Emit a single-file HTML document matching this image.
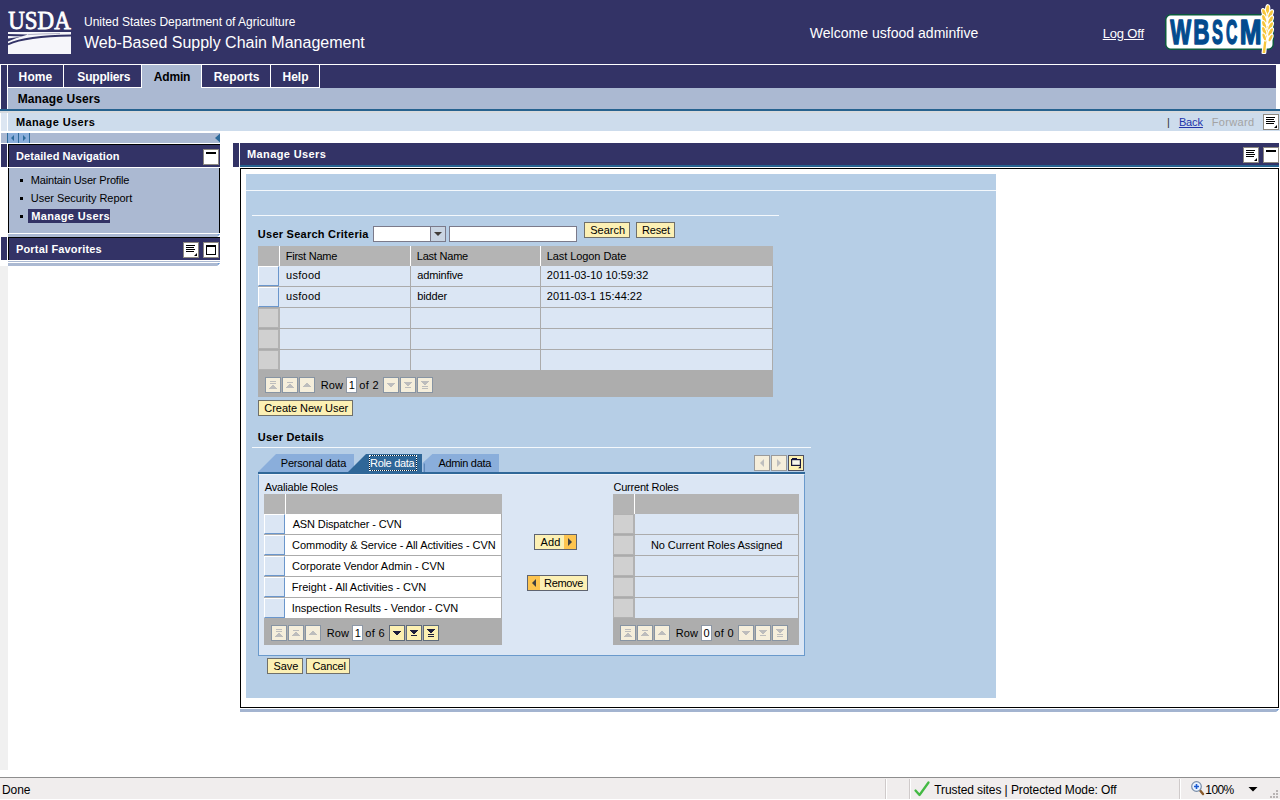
<!DOCTYPE html>
<html lang="en"><head><meta charset="utf-8"><title>Manage Users - WBSCM</title>
<style>
html,body{margin:0;padding:0;background:#fff;}
body{width:1280px;height:800px;overflow:hidden;position:relative;font-family:"Liberation Sans",Arial,sans-serif;font-size:11px;color:#000;}
body div,body svg,body a,body span.t{position:absolute;display:block;box-sizing:border-box;}
.t{white-space:nowrap;line-height:1;}
svg{overflow:visible;}
</style></head>
<body>
<div id="masthead" style="left:0;top:0;width:0;height:0;">
<div style="left:0px;top:0px;width:1280px;height:64px;background:#333366;"></div>
<svg style="left:8px;top:6px;" width="63" height="48" viewBox="0 0 63 48"><text x="0.3" y="23.2" font-family="Liberation Serif, serif" font-size="26" fill="#fff" stroke="#fff" stroke-width="0.8" textLength="62.4" lengthAdjust="spacingAndGlyphs">USDA</text><rect x="0" y="26" width="63" height="22" fill="#f6f6fa"/><path d="M0,38.4 Q18,30.1 63,29.6" stroke="#333366" stroke-width="2" fill="none"/><path d="M0,27.9 L20,28.6 Q9,31.5 0,35.6 Z" fill="#333366"/><path d="M0,29.9 L14.8,30.4 L0,32.5 Z" fill="#f6f6fa"/><path d="M20,28.6 Q35,27.7 52,27.5" stroke="#333366" stroke-width="0.6" fill="none" opacity="0.6"/></svg>
<div class="t" style="left:84px;top:16px;font-size:12px;color:#fff;">United States Department of Agriculture</div>
<div class="t" style="left:84px;top:35px;font-size:16px;color:#fff;">Web-Based Supply Chain Management</div>
<div class="t" style="left:809.7px;top:26px;font-size:14px;color:#fff;letter-spacing:0.03px;">Welcome usfood adminfive</div>
<a class="t" style="left:1102.66px;top:27px;font-size:13px;color:#fff;text-decoration:underline;letter-spacing:-0.17px;">Log Off</a>
<svg style="left:1165px;top:14px;" width="109" height="36" viewBox="0 0 109 36"><rect x="0.75" y="0.75" width="107.5" height="34.5" rx="5" ry="5" fill="#fff" stroke="#0b5a3c" stroke-width="1.5"/><text y="29.5" font-family="Liberation Sans, sans-serif" font-weight="700" font-size="35" fill="#034b8e" stroke="#034b8e" stroke-width="1.5" stroke-linejoin="round"><tspan x="5.25" textLength="20.92" lengthAdjust="spacingAndGlyphs">W</tspan><tspan x="28.17" textLength="16.3" lengthAdjust="spacingAndGlyphs">B</tspan><tspan x="46.89" textLength="10.9" lengthAdjust="spacingAndGlyphs">S</tspan><tspan x="60.92" textLength="11.32" lengthAdjust="spacingAndGlyphs">C</tspan><tspan x="74.63" textLength="21.81" lengthAdjust="spacingAndGlyphs">M</tspan></text><g fill="#f6c63c" stroke="#fff" stroke-width="2.2" stroke-linejoin="round" paint-order="stroke"><path d="M97.6,39 Q99,27 101.4,12 L103.2,12 Q101.4,27 100.2,39 Z"/><ellipse cx="102.6" cy="-4.5" rx="1.6" ry="4.3" transform="rotate(6 102.6 -4.5)"/><ellipse cx="99.2" cy="-1" rx="1.5" ry="4.2" transform="rotate(-20 99.2 -1)"/><ellipse cx="105.6" cy="0" rx="1.5" ry="4.2" transform="rotate(26 105.6 0)"/><ellipse cx="99.2" cy="5" rx="1.5" ry="4.2" transform="rotate(-20 99.2 5)"/><ellipse cx="105.6" cy="6" rx="1.5" ry="4.2" transform="rotate(26 105.6 6)"/><ellipse cx="99.2" cy="11" rx="1.5" ry="4.2" transform="rotate(-20 99.2 11)"/><ellipse cx="105.6" cy="12" rx="1.5" ry="4.2" transform="rotate(26 105.6 12)"/><ellipse cx="99.2" cy="17" rx="1.5" ry="4.2" transform="rotate(-20 99.2 17)"/><ellipse cx="105.6" cy="18" rx="1.5" ry="4.2" transform="rotate(26 105.6 18)"/><ellipse cx="99.2" cy="23" rx="1.3" ry="3.6" transform="rotate(-20 99.2 23)"/><ellipse cx="105.6" cy="24" rx="1.3" ry="3.6" transform="rotate(26 105.6 24)"/></g></svg>
</div>
<div id="navigation" style="left:0;top:0;width:0;height:0;">
<div style="left:1px;top:65px;width:1275px;height:23px;background:#333366;"></div>
<div style="left:1px;top:88px;width:6px;height:21px;background:#333366;"></div>
<div style="left:142px;top:65px;width:59px;height:23px;background:#abb9d2;"></div>
<div style="left:8px;top:88px;width:1268px;height:21px;background:#abb9d2;"></div>
<div style="left:7px;top:65px;width:1px;height:23px;background:#fff;"></div>
<div style="left:63px;top:65px;width:1px;height:23px;background:#fff;"></div>
<div style="left:141px;top:65px;width:1px;height:23px;background:#fff;"></div>
<div style="left:201px;top:65px;width:1px;height:23px;background:#fff;"></div>
<div style="left:270px;top:65px;width:1px;height:23px;background:#fff;"></div>
<div style="left:319px;top:65px;width:1px;height:23px;background:#fff;"></div>
<div style="left:7px;top:88px;width:1px;height:21px;background:#fff;"></div>
<div style="left:7px;top:87px;width:135px;height:1px;background:#fff;"></div>
<div style="left:201px;top:87px;width:119px;height:1px;background:#fff;"></div>
<div class="t" style="left:18.62px;top:71px;font-size:12px;font-weight:700;color:#fff;letter-spacing:0.11px;">Home</div>
<div class="t" style="left:77.35px;top:71px;font-size:12px;font-weight:700;color:#fff;letter-spacing:-0.2px;">Suppliers</div>
<div class="t" style="left:153.85px;top:71px;font-size:12px;font-weight:700;letter-spacing:-0.19px;">Admin</div>
<div class="t" style="left:213.82px;top:71px;font-size:12px;font-weight:700;color:#fff;letter-spacing:0.05px;">Reports</div>
<div class="t" style="left:282.62px;top:71px;font-size:12px;font-weight:700;color:#fff;letter-spacing:-0.04px;">Help</div>
<div class="t" style="left:17.72px;top:93px;font-size:12px;font-weight:700;letter-spacing:0.1px;">Manage Users</div>
<div style="left:0px;top:109px;width:1280px;height:2px;background:#26628f;"></div>
<div style="left:0px;top:111px;width:1280px;height:2px;background:#d6dade;"></div>
<div style="left:1px;top:113px;width:6px;height:18px;background:#dce6f2;"></div>
<div style="left:8px;top:113px;width:1272px;height:18px;background:#cddcec;"></div>
<div class="t" style="left:15.93px;top:117px;font-weight:700;letter-spacing:0.39px;">Manage Users</div>
<div class="t" style="left:1167px;top:117px;color:#333;">|</div>
<a class="t" style="left:1178.92px;top:117px;color:#2233aa;text-decoration:underline;letter-spacing:-0.12px;">Back</a>
<div class="t" style="left:1211.77px;top:117px;color:#a3a3a3;letter-spacing:0.35px;">Forward</div>
<svg style="left:1263px;top:114px;" width="16" height="16" viewBox="0 0 16 16"><rect x="0.5" y="0.5" width="15" height="15" fill="#fff" stroke="#8c8880"/><path d="M3,3.5h9M3,5.5h8M3,7.5h9M3,9.5h8" stroke="#000" stroke-width="1" fill="none"/><path d="M14,11v3h-3z" fill="#000"/></svg>
<div style="left:1px;top:133px;width:219px;height:10px;background:#abb9d2;"></div>
<svg style="left:7px;top:133px;" width="23" height="10" viewBox="0 0 23 10"><rect x="0" y="0" width="23" height="10" fill="#8aaedb"/><path d="M0.5,0v10M11.5,0v10M22.5,0v10" stroke="#2d6a9a" fill="none"/><path d="M7,2v6l-3,-3zM16,2v6l3,-3z" fill="#2d6a9a"/></svg>
<svg style="left:214px;top:133px;" width="6" height="10" viewBox="0 0 6 10"><path d="M6,0.5v9l-5,-4.5z" fill="#2d6a9a"/></svg>
<div style="left:1px;top:144px;width:6px;height:23px;background:#333366;"></div>
<div style="left:8px;top:144px;width:212px;height:23px;background:#333366;border-top:1px solid #000;border-left:1px solid #000;"></div>
<div class="t" style="left:16.08px;top:151px;font-weight:700;color:#fff;letter-spacing:0.07px;">Detailed Navigation</div>
<svg style="left:203px;top:149px;" width="16" height="16" viewBox="0 0 16 16"><rect x="0.5" y="0.5" width="15" height="15" fill="#fff" stroke="#8c8880"/><rect x="3" y="3" width="10" height="2" fill="#000"/></svg>
<div style="left:8px;top:168px;width:212px;height:65px;background:#abb9d2;border-left:1px solid #000;border-right:1px solid #000;"></div>
<div style="left:20px;top:179px;width:3px;height:3px;background:#000;"></div>
<div class="t" style="left:30.72px;top:175px;letter-spacing:-0.17px;">Maintain User Profile</div>
<div style="left:20px;top:197px;width:3px;height:3px;background:#000;"></div>
<div class="t" style="left:30.77px;top:193px;letter-spacing:-0.03px;">User Security Report</div>
<div style="left:20px;top:215px;width:3px;height:3px;background:#000;"></div>
<div style="left:28px;top:209px;width:82px;height:14px;background:#333366;"></div>
<div class="t" style="left:31.18px;top:211px;font-weight:700;color:#fff;letter-spacing:0.36px;">Manage Users</div>
<div style="left:8px;top:234px;width:212px;height:3px;background:#abb9d2;"></div>
<svg style="left:216px;top:234px;" width="4" height="3" viewBox="0 0 4 3"><path d="M4,0V3H1.2Z" fill="#fff"/><path d="M1.8,0H4L1.8,2.2Z" fill="#6a9ad8"/></svg>
<div style="left:1px;top:237px;width:6px;height:23px;background:#333366;"></div>
<div style="left:8px;top:237px;width:212px;height:23px;background:#333366;border-top:1px solid #000;border-left:1px solid #000;"></div>
<div class="t" style="left:15.98px;top:244px;font-weight:700;color:#fff;letter-spacing:0.17px;">Portal Favorites</div>
<svg style="left:183px;top:242px;" width="16" height="16" viewBox="0 0 16 16"><rect x="0.5" y="0.5" width="15" height="15" fill="#fff" stroke="#8c8880"/><path d="M3,3.5h9M3,5.5h8M3,7.5h9M3,9.5h8" stroke="#000" stroke-width="1" fill="none"/><path d="M14,11v3h-3z" fill="#000"/></svg>
<svg style="left:203px;top:242px;" width="16" height="16" viewBox="0 0 16 16"><rect x="0.5" y="0.5" width="15" height="15" fill="#fff" stroke="#8c8880"/><rect x="3.5" y="3.5" width="9" height="9" fill="none" stroke="#000"/><rect x="3" y="3" width="10" height="2" fill="#000"/></svg>
<div style="left:8px;top:261px;width:212px;height:1px;background:#abb9d2;"></div>
<div style="left:8px;top:263px;width:212px;height:3px;background:#abb9d2;"></div>
<svg style="left:216px;top:263px;" width="4" height="3" viewBox="0 0 4 3"><path d="M4,0V3H1.2Z" fill="#fff"/><path d="M1.8,0H4L1.8,2.2Z" fill="#6a9ad8"/></svg>
<div style="left:0px;top:266px;width:8px;height:504px;background:#f0f0f0;"></div>
</div>
<div id="content" style="left:0;top:0;width:0;height:0;">
<div style="left:233px;top:143px;width:6px;height:24px;background:#333366;"></div>
<div style="left:240px;top:143px;width:1039px;height:22px;background:#333366;"></div>
<div style="left:240px;top:165px;width:1039px;height:2px;background:#26628f;"></div>
<div class="t" style="left:247.09px;top:149px;font-weight:700;color:#fff;letter-spacing:0.38px;">Manage Users</div>
<svg style="left:1243px;top:147px;" width="16" height="16" viewBox="0 0 16 16"><rect x="0.5" y="0.5" width="15" height="15" fill="#fff" stroke="#8c8880"/><path d="M3,3.5h9M3,5.5h8M3,7.5h9M3,9.5h8" stroke="#000" stroke-width="1" fill="none"/><path d="M14,11v3h-3z" fill="#000"/></svg>
<svg style="left:1263px;top:147px;" width="16" height="16" viewBox="0 0 16 16"><rect x="0.5" y="0.5" width="15" height="15" fill="#fff" stroke="#8c8880"/><rect x="3" y="3" width="10" height="2" fill="#000"/></svg>
<div style="left:240px;top:168px;width:1039px;height:540px;background:#fff;border:1px solid #000;"></div>
<div style="left:240px;top:709px;width:1039px;height:3px;background:#a3b4d0;"></div>
<svg style="left:1275px;top:709px;" width="4" height="3" viewBox="0 0 4 3"><path d="M4,0V3H1.2Z" fill="#fff"/><path d="M1.8,0H4L1.8,2.2Z" fill="#6a9ad8"/></svg>
<div style="left:246px;top:174px;width:750px;height:524px;background:#b6cee6;"></div>
<div style="left:246px;top:190px;width:750px;height:1px;background:#f4f8fc;"></div>
<div style="left:252px;top:215px;width:527px;height:1px;background:#f4f8fc;"></div>
<div class="t" style="left:257.84px;top:229px;font-weight:700;letter-spacing:0.25px;">User Search Criteria</div>
<div style="left:373px;top:226px;width:73px;height:16px;background:#fff;border:1px solid #7b7a8a;"></div>
<div style="left:430px;top:227px;width:15px;height:14px;background:#c9d5e3;border-left:1px solid #7b7a8a;"></div>
<svg style="left:434px;top:232px;" width="8" height="4" viewBox="0 0 8 4"><path d="M0,0h8l-4,4z" fill="#403c38"/></svg>
<div style="left:449px;top:226px;width:128px;height:16px;background:#fff;border:1px solid #7b7a8a;"></div>
<div style="left:584px;top:222px;width:46px;height:16px;background:#fcf0b4;border:1px solid #70706a;"></div>
<div class="t" style="left:590.3px;top:225px;letter-spacing:-0.01px;">Search</div>
<div style="left:636px;top:222px;width:39px;height:16px;background:#fcf0b4;border:1px solid #70706a;"></div>
<div class="t" style="left:642.02px;top:225px;letter-spacing:-0.18px;">Reset</div>
<div style="left:258px;top:246px;width:515px;height:20px;background:#b4b4b4;"></div>
<div style="left:279px;top:246px;width:1px;height:20px;background:#fff;"></div>
<div style="left:410px;top:246px;width:1px;height:20px;background:#fff;"></div>
<div style="left:540px;top:246px;width:1px;height:20px;background:#fff;"></div>
<div style="left:258px;top:266px;width:515px;height:20px;background:#dbe6f4;"></div>
<div style="left:258px;top:266px;width:21px;height:20px;background:#dbe6f4;border-top:1px solid #fff;border-left:1px solid #fff;border-bottom:1px solid #6a96cc;border-right:1px solid #6a96cc;"></div>
<div style="left:410px;top:266px;width:1px;height:20px;background:#ababab;"></div>
<div style="left:540px;top:266px;width:1px;height:20px;background:#ababab;"></div>
<div style="left:258px;top:286px;width:515px;height:1px;background:#ababab;"></div>
<div style="left:258px;top:287px;width:515px;height:20px;background:#dbe6f4;"></div>
<div style="left:258px;top:287px;width:21px;height:20px;background:#dbe6f4;border-top:1px solid #fff;border-left:1px solid #fff;border-bottom:1px solid #6a96cc;border-right:1px solid #6a96cc;"></div>
<div style="left:410px;top:287px;width:1px;height:20px;background:#ababab;"></div>
<div style="left:540px;top:287px;width:1px;height:20px;background:#ababab;"></div>
<div style="left:258px;top:307px;width:515px;height:1px;background:#ababab;"></div>
<div style="left:258px;top:308px;width:515px;height:20px;background:#dbe6f4;"></div>
<div style="left:258px;top:308px;width:22px;height:20px;background:#d0d0d0;border:1px solid #b2b2b2;border-right-width:2px;"></div>
<div style="left:410px;top:308px;width:1px;height:20px;background:#ababab;"></div>
<div style="left:540px;top:308px;width:1px;height:20px;background:#ababab;"></div>
<div style="left:258px;top:328px;width:515px;height:1px;background:#ababab;"></div>
<div style="left:258px;top:329px;width:515px;height:20px;background:#dbe6f4;"></div>
<div style="left:258px;top:329px;width:22px;height:20px;background:#d0d0d0;border:1px solid #b2b2b2;border-right-width:2px;"></div>
<div style="left:410px;top:329px;width:1px;height:20px;background:#ababab;"></div>
<div style="left:540px;top:329px;width:1px;height:20px;background:#ababab;"></div>
<div style="left:258px;top:349px;width:515px;height:1px;background:#ababab;"></div>
<div style="left:258px;top:350px;width:515px;height:20px;background:#dbe6f4;"></div>
<div style="left:258px;top:350px;width:22px;height:20px;background:#d0d0d0;border:1px solid #b2b2b2;border-right-width:2px;"></div>
<div style="left:410px;top:350px;width:1px;height:20px;background:#ababab;"></div>
<div style="left:540px;top:350px;width:1px;height:20px;background:#ababab;"></div>
<div style="left:258px;top:370px;width:515px;height:27px;background:#adadad;"></div>
<div style="left:772px;top:266px;width:1px;height:104px;background:#ababab;"></div>
<div class="t" style="left:285.77px;top:251px;letter-spacing:-0.25px;">First Name</div>
<div class="t" style="left:416.77px;top:251px;letter-spacing:-0.22px;">Last Name</div>
<div class="t" style="left:546.77px;top:251px;letter-spacing:-0.08px;">Last Logon Date</div>
<div class="t" style="left:285.99px;top:270px;letter-spacing:0.28px;">usfood</div>
<div class="t" style="left:417.36px;top:270px;letter-spacing:-0.16px;">adminfive</div>
<div class="t" style="left:546.85px;top:270px;letter-spacing:0.01px;">2011-03-10 10:59:32</div>
<div class="t" style="left:285.99px;top:291px;letter-spacing:0.28px;">usfood</div>
<div class="t" style="left:417.24px;top:291px;letter-spacing:-0.15px;">bidder</div>
<div class="t" style="left:546.85px;top:291px;">2011-03-1 15:44:22</div>
<svg style="left:265px;top:377px;" width="16" height="16" viewBox="0 0 16 16"><rect x="0.5" y="0.5" width="15" height="15" fill="#f5eedb" stroke="#8794a3"/><g fill="#bdbdbd"><rect x="5" y="4" width="6" height="1"/><rect x="5" y="6" width="6" height="1"/><rect x="7" y="8" width="2" height="1"/><rect x="6" y="9" width="4" height="1"/><rect x="5" y="10" width="6" height="1"/><rect x="4" y="11" width="8" height="1"/></g></svg>
<svg style="left:282px;top:377px;" width="16" height="16" viewBox="0 0 16 16"><rect x="0.5" y="0.5" width="15" height="15" fill="#f5eedb" stroke="#8794a3"/><g fill="#bdbdbd"><rect x="5" y="5" width="6" height="1"/><rect x="7" y="7" width="2" height="1"/><rect x="6" y="8" width="4" height="1"/><rect x="5" y="9" width="6" height="1"/><rect x="4" y="10" width="8" height="1"/></g></svg>
<svg style="left:299px;top:377px;" width="16" height="16" viewBox="0 0 16 16"><rect x="0.5" y="0.5" width="15" height="15" fill="#f5eedb" stroke="#8794a3"/><g fill="#bdbdbd"><rect x="7" y="6" width="2" height="1"/><rect x="6" y="7" width="4" height="1"/><rect x="5" y="8" width="6" height="1"/><rect x="4" y="9" width="8" height="1"/></g></svg>
<div class="t" style="left:320.77px;top:380px;letter-spacing:0.14px;">Row</div>
<div style="left:346px;top:377px;width:11px;height:16px;background:#fff;border:1px solid #8e98a6;"></div>
<div class="t" style="left:348.77px;top:380px;">1</div>
<div class="t" style="left:359.36px;top:380px;letter-spacing:0.31px;">of 2</div>
<svg style="left:383px;top:377px;" width="16" height="16" viewBox="0 0 16 16"><rect x="0.5" y="0.5" width="15" height="15" fill="#f5eedb" stroke="#8794a3"/><g fill="#bdbdbd"><rect x="4" y="6" width="8" height="1"/><rect x="5" y="7" width="6" height="1"/><rect x="6" y="8" width="4" height="1"/><rect x="7" y="9" width="2" height="1"/></g></svg>
<svg style="left:400px;top:377px;" width="16" height="16" viewBox="0 0 16 16"><rect x="0.5" y="0.5" width="15" height="15" fill="#f5eedb" stroke="#8794a3"/><g fill="#bdbdbd"><rect x="4" y="5" width="8" height="1"/><rect x="5" y="6" width="6" height="1"/><rect x="6" y="7" width="4" height="1"/><rect x="7" y="8" width="2" height="1"/><rect x="5" y="10" width="6" height="1"/></g></svg>
<svg style="left:417px;top:377px;" width="16" height="16" viewBox="0 0 16 16"><rect x="0.5" y="0.5" width="15" height="15" fill="#f5eedb" stroke="#8794a3"/><g fill="#bdbdbd"><rect x="4" y="4" width="8" height="1"/><rect x="5" y="5" width="6" height="1"/><rect x="6" y="6" width="4" height="1"/><rect x="7" y="7" width="2" height="1"/><rect x="5" y="9" width="6" height="1"/><rect x="5" y="11" width="6" height="1"/></g></svg>
<div style="left:258px;top:400px;width:95px;height:16px;background:#fcf0b4;border:1px solid #70706a;"></div>
<div class="t" style="left:264.25px;top:403px;letter-spacing:-0.03px;">Create New User</div>
<div class="t" style="left:257.84px;top:432px;font-weight:700;letter-spacing:0.22px;">User Details</div>
<div style="left:252px;top:447px;width:559px;height:1px;background:#f4f8fc;"></div>
<svg style="left:258px;top:454px;" width="260" height="18" viewBox="0 0 260 18"><path d="M0,18 L18,0 L96,0 L96,18 Z" fill="#8aaedb"/><path d="M164.6,18 L164.6,9 L174.4,0 L241,0 L241,18 Z" fill="#8aaedb"/><path d="M166.4,18 V9.5" stroke="#5d87b8" stroke-width="1.2" fill="none"/><path d="M90,18 L108,0 L164,0 L164,18 Z" fill="#2f6798"/></svg>
<div style="left:258px;top:472px;width:547px;height:2px;background:#2f6798;"></div>
<div style="left:369px;top:455px;width:48px;height:16px;border:1px solid #10202c;"></div>
<div style="left:369px;top:455px;width:48px;height:16px;border:1px dotted #fff;"></div>
<div class="t" style="left:280.77px;top:458px;letter-spacing:-0.2px;">Personal data</div>
<div class="t" style="left:370.02px;top:458px;color:#fff;letter-spacing:-0.31px;">Role data</div>
<div class="t" style="left:438.4px;top:458px;letter-spacing:-0.3px;">Admin data</div>
<svg style="left:754px;top:455px;" width="16" height="16" viewBox="0 0 16 16"><rect x="0.5" y="0.5" width="15" height="15" fill="#f5eedb" stroke="#9a9a9a"/><path d="M10,4v8l-4,-4z" fill="#bebebe"/></svg>
<svg style="left:771px;top:455px;" width="16" height="16" viewBox="0 0 16 16"><rect x="0.5" y="0.5" width="15" height="15" fill="#f5eedb" stroke="#9a9a9a"/><path d="M6,4v8l4,-4z" fill="#bebebe"/></svg>
<svg style="left:788px;top:455px;" width="16" height="16" viewBox="0 0 16 16"><rect x="0.5" y="0.5" width="15" height="15" fill="#fcf0b1" stroke="#50505f"/><rect x="3.6" y="4.6" width="8.8" height="5.8" fill="#f6f6ea" stroke="#16163c" stroke-width="1.2"/><rect x="4" y="3" width="5" height="1.6" fill="#16163c"/><path d="M13,10.6V13.2H10.2Z" fill="#16163c"/></svg>
<div style="left:258px;top:474px;width:547px;height:182px;background:#dbe6f4;border:1px solid #6a9acc;border-top:1px solid #eef3fa;"></div>
<div class="t" style="left:264.8px;top:482px;letter-spacing:-0.18px;">Avaliable Roles</div>
<div class="t" style="left:613.45px;top:482px;letter-spacing:-0.21px;">Current Roles</div>
<div style="left:264px;top:494px;width:238px;height:20px;background:#b4b4b4;"></div>
<div style="left:285px;top:494px;width:1px;height:20px;background:#fff;"></div>
<div style="left:264px;top:514px;width:238px;height:20px;background:#fff;"></div>
<div style="left:264px;top:514px;width:21px;height:20px;background:#dbe6f4;border-top:1px solid #fff;border-left:1px solid #fff;border-bottom:1px solid #6a96cc;border-right:1px solid #6a96cc;"></div>
<div style="left:264px;top:534px;width:238px;height:1px;background:#ababab;"></div>
<div style="left:264px;top:535px;width:238px;height:20px;background:#fff;"></div>
<div style="left:264px;top:535px;width:21px;height:20px;background:#dbe6f4;border-top:1px solid #fff;border-left:1px solid #fff;border-bottom:1px solid #6a96cc;border-right:1px solid #6a96cc;"></div>
<div style="left:264px;top:555px;width:238px;height:1px;background:#ababab;"></div>
<div style="left:264px;top:556px;width:238px;height:20px;background:#fff;"></div>
<div style="left:264px;top:556px;width:21px;height:20px;background:#dbe6f4;border-top:1px solid #fff;border-left:1px solid #fff;border-bottom:1px solid #6a96cc;border-right:1px solid #6a96cc;"></div>
<div style="left:264px;top:576px;width:238px;height:1px;background:#ababab;"></div>
<div style="left:264px;top:577px;width:238px;height:20px;background:#fff;"></div>
<div style="left:264px;top:577px;width:21px;height:20px;background:#dbe6f4;border-top:1px solid #fff;border-left:1px solid #fff;border-bottom:1px solid #6a96cc;border-right:1px solid #6a96cc;"></div>
<div style="left:264px;top:597px;width:238px;height:1px;background:#ababab;"></div>
<div style="left:264px;top:598px;width:238px;height:20px;background:#fff;"></div>
<div style="left:264px;top:598px;width:21px;height:20px;background:#dbe6f4;border-top:1px solid #fff;border-left:1px solid #fff;border-bottom:1px solid #6a96cc;border-right:1px solid #6a96cc;"></div>
<div style="left:264px;top:618px;width:238px;height:27px;background:#adadad;"></div>
<div style="left:501px;top:514px;width:1px;height:104px;background:#ababab;"></div>
<div class="t" style="left:292.65px;top:519px;letter-spacing:-0.12px;">ASN Dispatcher - CVN</div>
<div class="t" style="left:292.1px;top:540px;letter-spacing:-0.06px;">Commodity &amp; Service - All Activities - CVN</div>
<div class="t" style="left:292.1px;top:561px;letter-spacing:-0.03px;">Corporate Vendor Admin - CVN</div>
<div class="t" style="left:291.77px;top:582px;">Freight - All Activities - CVN</div>
<div class="t" style="left:291.66px;top:603px;letter-spacing:-0.03px;">Inspection Results - Vendor - CVN</div>
<svg style="left:271px;top:625px;" width="16" height="16" viewBox="0 0 16 16"><rect x="0.5" y="0.5" width="15" height="15" fill="#f5eedb" stroke="#8794a3"/><g fill="#bdbdbd"><rect x="5" y="4" width="6" height="1"/><rect x="5" y="6" width="6" height="1"/><rect x="7" y="8" width="2" height="1"/><rect x="6" y="9" width="4" height="1"/><rect x="5" y="10" width="6" height="1"/><rect x="4" y="11" width="8" height="1"/></g></svg>
<svg style="left:288px;top:625px;" width="16" height="16" viewBox="0 0 16 16"><rect x="0.5" y="0.5" width="15" height="15" fill="#f5eedb" stroke="#8794a3"/><g fill="#bdbdbd"><rect x="5" y="5" width="6" height="1"/><rect x="7" y="7" width="2" height="1"/><rect x="6" y="8" width="4" height="1"/><rect x="5" y="9" width="6" height="1"/><rect x="4" y="10" width="8" height="1"/></g></svg>
<svg style="left:305px;top:625px;" width="16" height="16" viewBox="0 0 16 16"><rect x="0.5" y="0.5" width="15" height="15" fill="#f5eedb" stroke="#8794a3"/><g fill="#bdbdbd"><rect x="7" y="6" width="2" height="1"/><rect x="6" y="7" width="4" height="1"/><rect x="5" y="8" width="6" height="1"/><rect x="4" y="9" width="8" height="1"/></g></svg>
<div class="t" style="left:326.77px;top:628px;letter-spacing:0.14px;">Row</div>
<div style="left:352px;top:625px;width:11px;height:16px;background:#fff;border:1px solid #8e98a6;"></div>
<div class="t" style="left:354.77px;top:628px;">1</div>
<div class="t" style="left:365.36px;top:628px;letter-spacing:0.29px;">of 6</div>
<svg style="left:389px;top:625px;" width="16" height="16" viewBox="0 0 16 16"><rect x="0.5" y="0.5" width="15" height="15" fill="#fcf0b1" stroke="#5f6b7b"/><g fill="#1e1e3c"><rect x="4" y="6" width="8" height="1"/><rect x="5" y="7" width="6" height="1"/><rect x="6" y="8" width="4" height="1"/><rect x="7" y="9" width="2" height="1"/></g></svg>
<svg style="left:406px;top:625px;" width="16" height="16" viewBox="0 0 16 16"><rect x="0.5" y="0.5" width="15" height="15" fill="#fcf0b1" stroke="#5f6b7b"/><g fill="#1e1e3c"><rect x="4" y="5" width="8" height="1"/><rect x="5" y="6" width="6" height="1"/><rect x="6" y="7" width="4" height="1"/><rect x="7" y="8" width="2" height="1"/><rect x="5" y="10" width="6" height="1"/></g></svg>
<svg style="left:423px;top:625px;" width="16" height="16" viewBox="0 0 16 16"><rect x="0.5" y="0.5" width="15" height="15" fill="#fcf0b1" stroke="#5f6b7b"/><g fill="#1e1e3c"><rect x="4" y="4" width="8" height="1"/><rect x="5" y="5" width="6" height="1"/><rect x="6" y="6" width="4" height="1"/><rect x="7" y="7" width="2" height="1"/><rect x="5" y="9" width="6" height="1"/><rect x="5" y="11" width="6" height="1"/></g></svg>
<div style="left:613px;top:494px;width:186px;height:20px;background:#b4b4b4;"></div>
<div style="left:634px;top:494px;width:1px;height:20px;background:#fff;"></div>
<div style="left:613px;top:514px;width:186px;height:20px;background:#dbe6f4;"></div>
<div style="left:613px;top:514px;width:22px;height:20px;background:#d0d0d0;border:1px solid #b2b2b2;border-right-width:2px;"></div>
<div style="left:613px;top:534px;width:186px;height:1px;background:#ababab;"></div>
<div style="left:613px;top:535px;width:186px;height:20px;background:#dbe6f4;"></div>
<div style="left:613px;top:535px;width:22px;height:20px;background:#d0d0d0;border:1px solid #b2b2b2;border-right-width:2px;"></div>
<div style="left:613px;top:555px;width:186px;height:1px;background:#ababab;"></div>
<div style="left:613px;top:556px;width:186px;height:20px;background:#dbe6f4;"></div>
<div style="left:613px;top:556px;width:22px;height:20px;background:#d0d0d0;border:1px solid #b2b2b2;border-right-width:2px;"></div>
<div style="left:613px;top:576px;width:186px;height:1px;background:#ababab;"></div>
<div style="left:613px;top:577px;width:186px;height:20px;background:#dbe6f4;"></div>
<div style="left:613px;top:577px;width:22px;height:20px;background:#d0d0d0;border:1px solid #b2b2b2;border-right-width:2px;"></div>
<div style="left:613px;top:597px;width:186px;height:1px;background:#ababab;"></div>
<div style="left:613px;top:598px;width:186px;height:20px;background:#dbe6f4;"></div>
<div style="left:613px;top:598px;width:22px;height:20px;background:#d0d0d0;border:1px solid #b2b2b2;border-right-width:2px;"></div>
<div style="left:613px;top:618px;width:186px;height:27px;background:#adadad;"></div>
<div style="left:798px;top:514px;width:1px;height:104px;background:#ababab;"></div>
<div class="t" style="left:650.92px;top:540px;letter-spacing:-0.05px;">No Current Roles Assigned</div>
<svg style="left:620px;top:625px;" width="16" height="16" viewBox="0 0 16 16"><rect x="0.5" y="0.5" width="15" height="15" fill="#f5eedb" stroke="#8794a3"/><g fill="#bdbdbd"><rect x="5" y="4" width="6" height="1"/><rect x="5" y="6" width="6" height="1"/><rect x="7" y="8" width="2" height="1"/><rect x="6" y="9" width="4" height="1"/><rect x="5" y="10" width="6" height="1"/><rect x="4" y="11" width="8" height="1"/></g></svg>
<svg style="left:637px;top:625px;" width="16" height="16" viewBox="0 0 16 16"><rect x="0.5" y="0.5" width="15" height="15" fill="#f5eedb" stroke="#8794a3"/><g fill="#bdbdbd"><rect x="5" y="5" width="6" height="1"/><rect x="7" y="7" width="2" height="1"/><rect x="6" y="8" width="4" height="1"/><rect x="5" y="9" width="6" height="1"/><rect x="4" y="10" width="8" height="1"/></g></svg>
<svg style="left:654px;top:625px;" width="16" height="16" viewBox="0 0 16 16"><rect x="0.5" y="0.5" width="15" height="15" fill="#f5eedb" stroke="#8794a3"/><g fill="#bdbdbd"><rect x="7" y="6" width="2" height="1"/><rect x="6" y="7" width="4" height="1"/><rect x="5" y="8" width="6" height="1"/><rect x="4" y="9" width="8" height="1"/></g></svg>
<div class="t" style="left:675.77px;top:628px;letter-spacing:0.14px;">Row</div>
<div style="left:701px;top:625px;width:11px;height:16px;background:#fff;border:1px solid #8e98a6;"></div>
<div class="t" style="left:703.62px;top:628px;">0</div>
<div class="t" style="left:714.36px;top:628px;letter-spacing:0.27px;">of 0</div>
<svg style="left:738px;top:625px;" width="16" height="16" viewBox="0 0 16 16"><rect x="0.5" y="0.5" width="15" height="15" fill="#f5eedb" stroke="#8794a3"/><g fill="#bdbdbd"><rect x="4" y="6" width="8" height="1"/><rect x="5" y="7" width="6" height="1"/><rect x="6" y="8" width="4" height="1"/><rect x="7" y="9" width="2" height="1"/></g></svg>
<svg style="left:755px;top:625px;" width="16" height="16" viewBox="0 0 16 16"><rect x="0.5" y="0.5" width="15" height="15" fill="#f5eedb" stroke="#8794a3"/><g fill="#bdbdbd"><rect x="4" y="5" width="8" height="1"/><rect x="5" y="6" width="6" height="1"/><rect x="6" y="7" width="4" height="1"/><rect x="7" y="8" width="2" height="1"/><rect x="5" y="10" width="6" height="1"/></g></svg>
<svg style="left:772px;top:625px;" width="16" height="16" viewBox="0 0 16 16"><rect x="0.5" y="0.5" width="15" height="15" fill="#f5eedb" stroke="#8794a3"/><g fill="#bdbdbd"><rect x="4" y="4" width="8" height="1"/><rect x="5" y="5" width="6" height="1"/><rect x="6" y="6" width="4" height="1"/><rect x="7" y="7" width="2" height="1"/><rect x="5" y="9" width="6" height="1"/><rect x="5" y="11" width="6" height="1"/></g></svg>
<div style="left:534px;top:534px;width:43px;height:16px;background:#fcf0b4;border:1px solid #5f6470;"></div>
<div style="left:564px;top:535px;width:12px;height:14px;background:#fdc44f;"></div>
<svg style="left:568px;top:538px;" width="4" height="8" viewBox="0 0 4 8"><path d="M0,0v8l4,-4z" fill="#404040"/></svg>
<div class="t" style="left:540.4px;top:537px;letter-spacing:0.24px;">Add</div>
<div style="left:527px;top:575px;width:61px;height:16px;background:#fcf0b4;border:1px solid #5f6470;"></div>
<div style="left:528px;top:576px;width:12px;height:14px;background:#fdc44f;"></div>
<svg style="left:532px;top:579px;" width="4" height="8" viewBox="0 0 4 8"><path d="M4,0v8l-4,-4z" fill="#404040"/></svg>
<div class="t" style="left:544.02px;top:578px;letter-spacing:-0.31px;">Remove</div>
<div style="left:267px;top:658px;width:36px;height:16px;background:#fcf0b4;border:1px solid #70706a;"></div>
<div class="t" style="left:273.4px;top:661px;letter-spacing:-0.05px;">Save</div>
<div style="left:306px;top:658px;width:44px;height:16px;background:#fcf0b4;border:1px solid #70706a;"></div>
<div class="t" style="left:312.6px;top:661px;letter-spacing:-0.18px;">Cancel</div>
</div>
<div id="statusbar" style="left:0;top:0;width:0;height:0;">
<div style="left:0px;top:777px;width:1280px;height:1px;background:#8e8e8e;"></div>
<div style="left:0px;top:778px;width:1280px;height:21px;background:#f0eded;"></div>
<div class="t" style="left:1.94px;top:784px;font-size:12px;letter-spacing:-0.05px;">Done</div>
<div style="left:885px;top:779px;width:1px;height:20px;background:#cfcaca;"></div>
<div style="left:886px;top:779px;width:1px;height:20px;background:#fff;"></div>
<div style="left:909px;top:779px;width:1px;height:20px;background:#cfcaca;"></div>
<div style="left:910px;top:779px;width:1px;height:20px;background:#fff;"></div>
<div style="left:1179px;top:779px;width:1px;height:20px;background:#cfcaca;"></div>
<div style="left:1180px;top:779px;width:1px;height:20px;background:#fff;"></div>
<svg style="left:914px;top:781px;" width="16" height="16" viewBox="0 0 16 16"><path d="M1.5,9.5 L5.5,14 L14.5,1.5" stroke="#44b944" stroke-width="2.3" fill="none" stroke-linecap="round" stroke-linejoin="round"/></svg>
<div class="t" style="left:934.16px;top:784px;font-size:12px;letter-spacing:-0.08px;">Trusted sites | Protected Mode: Off</div>
<svg style="left:1190px;top:780px;" width="16" height="16" viewBox="0 0 16 16"><path d="M8.5,8.5 L13,14" stroke="#8a5a2a" stroke-width="2.4" stroke-linecap="round"/><circle cx="6.5" cy="6.5" r="4.8" fill="#e8f2ff" stroke="#7a8ea8" stroke-width="1.2"/><path d="M4,6.5h5M6.5,4v5" stroke="#1a5ad0" stroke-width="1.6"/></svg>
<div class="t" style="left:1205.3px;top:784px;font-size:12px;letter-spacing:-0.57px;">100%</div>
<svg style="left:1248px;top:786px;" width="10" height="6" viewBox="0 0 10 6"><path d="M0.5,1h9l-4.5,4.5z" fill="#000"/></svg>
<svg style="left:1268px;top:788px;" width="12" height="12" viewBox="0 0 12 12"><g fill="#b8b4b4"><rect x="8" y="2" width="2" height="2"/><rect x="5" y="5" width="2" height="2"/><rect x="8" y="5" width="2" height="2"/><rect x="2" y="8" width="2" height="2"/><rect x="5" y="8" width="2" height="2"/><rect x="8" y="8" width="2" height="2"/></g></svg>
</div>
</body></html>
